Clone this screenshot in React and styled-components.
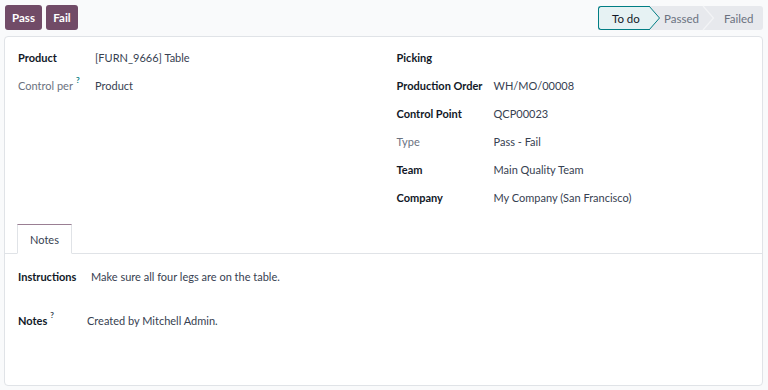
import React from "react";
import styled, { createGlobalStyle } from "styled-components";

const Global = createGlobalStyle`
  html, body { margin: 0; padding: 0; background: #f9fafb; }
  body { font-family: "Lato", "Noto Sans", sans-serif; font-size: 11px; color: #374151; }
  * { box-sizing: border-box; }
`;

const Page = styled.div`
  width: 768px;
  height: 390px;
  display: flex;
  flex-direction: column;
  background: #f9fafb;
`;

const ControlPanel = styled.div`
  height: 36px;
  display: flex;
  align-items: flex-start;
  justify-content: space-between;
  padding: 5px 5px 0 5px;
`;

const Buttons = styled.div`
  display: flex;
  gap: 4px;
`;

const ActionButton = styled.button`
  height: 25px;
  width: ${(p) => p.$w}px;
  padding: 0;
  border: none;
  border-radius: 3px;
  background: #714b67;
  color: #fff;
  font-family: inherit;
  font-weight: 700;
  font-size: 11.5px;
`;

const StatusBar = styled.div`
  display: flex;
  height: 24px;
  margin-top: 1px;
  background: #e7e9ed;
  border-radius: 3px;
`;

const Stage = styled.div`
  position: relative;
  display: flex;
  align-items: center;
  height: 24px;
  width: ${(p) => p.$w}px;
  padding-left: ${(p) => p.$pl}px;
  font-size: 11.5px;
  color: ${(p) => (p.$active ? "#111827" : "#6b7280")};
  background: ${(p) => (p.$active ? "#e6f2f3" : "transparent")};
  border: 1px solid ${(p) => (p.$active ? "#017e84" : "transparent")};
  border-right: none;
  border-radius: ${(p) => (p.$first ? "3px 0 0 3px" : "0")};
  z-index: ${(p) => (p.$active ? 2 : 1)};
`;

const Chevron = styled.svg`
  position: absolute;
  top: -1px;
  right: -11px;
  width: 11px;
  height: 24px;
  overflow: visible;
`;

const Sheet = styled.div`
  margin: 0 5px 4px 4px;
  height: 350px;
  background: #fff;
  border: 1px solid #e0e3e7;
  border-radius: 4px;
  display: flex;
  flex-direction: column;
`;

const Group = styled.div`
  display: grid;
  grid-template-columns: 1fr 1fr;
  padding: 6px 0 0 0;
`;

const Column = styled.div`
  padding: 0 13px;
  display: grid;
  grid-template-columns: ${(p) => p.$label}px 1fr;
  grid-auto-rows: 28px;
  align-content: start;
`;

const Label = styled.div`
  display: flex;
  align-items: center;
  font-weight: ${(p) => (p.$muted ? 400 : 700)};
  color: ${(p) => (p.$muted ? "#6b7280" : "#111827")};
  white-space: nowrap;
`;

const Value = styled.div`
  display: flex;
  align-items: center;
  color: #374151;
  white-space: nowrap;
`;

const Help = styled.span`
  color: ${(p) => (p.$dark ? "#374151" : "#017e84")};
  font-size: 8px;
  font-weight: 700;
  margin-left: 3px;
  position: relative;
  top: -5px;
`;

const Tabs = styled.div`
  margin-top: 13px;
  padding-left: 12px;
  display: flex;
  border-bottom: 1px solid #e0e3e7;
`;

const Tab = styled.div`
  width: 55px;
  height: 30px;
  margin-bottom: -1px;
  display: flex;
  align-items: center;
  justify-content: center;
  color: #374151;
  background: #fff;
  border: 1px solid #e0e3e7;
  border-top: 1px solid #9a7f93;
  border-bottom-color: #fff;
`;

const TabContent = styled.div`
  padding: 13px 13px 0 13px;
  display: flex;
  flex-direction: column;
`;

const NoteRow = styled.div`
  display: grid;
  grid-template-columns: ${(p) => p.$label}px 1fr;
  height: 18px;
  margin-bottom: ${(p) => p.$mb || 0}px;
  align-items: center;
`;

export default function App() {
  return (
    <Page>
      <Global />
      <ControlPanel>
        <Buttons>
          <ActionButton $w={37}>Pass</ActionButton>
          <ActionButton $w={32}>Fail</ActionButton>
        </Buttons>
        <StatusBar>
          <Stage $active $first $w={51} $pl={13}>
            To do
            <Chevron viewBox="0 0 11 24">
              <path d="M0 0 L10.5 12 L0 24 Z" fill="#e6f2f3" />
              <path d="M0 0 L10.5 12 L0 24" fill="none" stroke="#017e84" strokeWidth="1" />
            </Chevron>
          </Stage>
          <Stage $w={54} $pl={14}>
            Passed
            <Chevron viewBox="0 0 11 24">
              <path d="M0 0 L10.5 12 L0 24" fill="none" stroke="#f3f4f6" strokeWidth="1.2" />
            </Chevron>
          </Stage>
          <Stage $w={60} $pl={20}>Failed</Stage>
        </StatusBar>
      </ControlPanel>
      <Sheet>
        <Group>
          <Column $label={77}>
            <Label>Product</Label>
            <Value>[FURN_9666] Table</Value>
            <Label $muted>
              Control per<Help>?</Help>
            </Label>
            <Value>Product</Value>
          </Column>
          <Column $label={97}>
            <Label>Picking</Label>
            <Value></Value>
            <Label>Production Order</Label>
            <Value>WH/MO/00008</Value>
            <Label>Control Point</Label>
            <Value>QCP00023</Value>
            <Label $muted>Type</Label>
            <Value>Pass - Fail</Value>
            <Label>Team</Label>
            <Value>Main Quality Team</Value>
            <Label>Company</Label>
            <Value>My Company (San Francisco)</Value>
          </Column>
        </Group>
        <Tabs>
          <Tab>Notes</Tab>
        </Tabs>
        <TabContent>
          <NoteRow $label={73} $mb={26}>
            <Label>Instructions</Label>
            <Value>Make sure all four legs are on the table.</Value>
          </NoteRow>
          <NoteRow $label={69}>
            <Label>
              Notes<Help $dark>?</Help>
            </Label>
            <Value>Created by Mitchell Admin.</Value>
          </NoteRow>
        </TabContent>
      </Sheet>
    </Page>
  );
}
